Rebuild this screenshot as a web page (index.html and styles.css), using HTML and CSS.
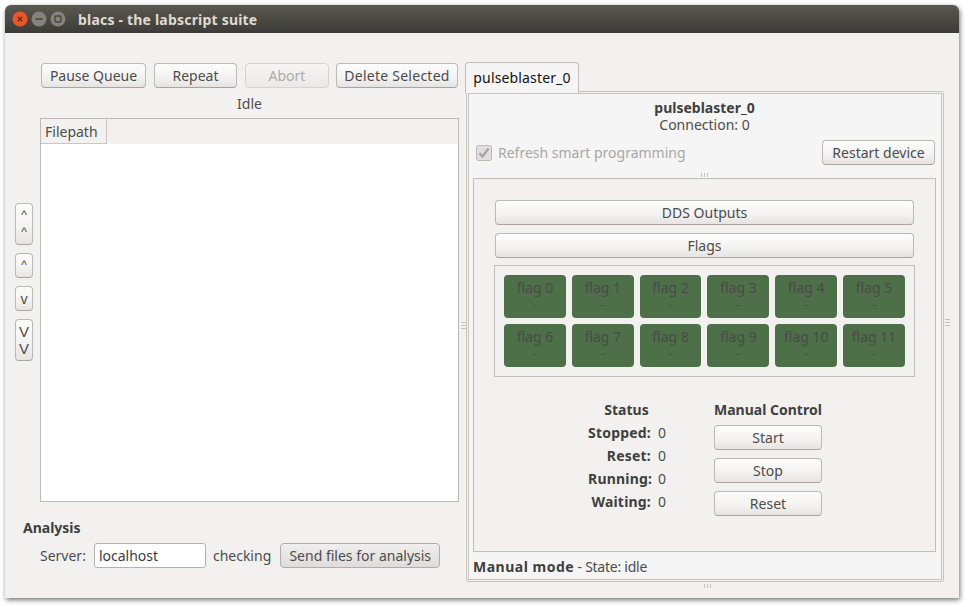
FILE: index.html
```html
<!DOCTYPE html>
<html lang="en">
<head>
<meta charset="utf-8">
<title>blacs - the labscript suite</title>
<link rel="stylesheet" href="styles.css">
</head>
<body>
<div class="window">
  <header class="titlebar">
    <div class="controls">
      <svg class="ctl" viewBox="0 0 16 16"><circle cx="8" cy="8" r="7.5" fill="#e9562a"/><path d="M5.8 5.8l4.4 4.4M10.2 5.8l-4.4 4.4" stroke="#5e2a17" stroke-width="1.3"/></svg>
      <svg class="ctl" viewBox="0 0 16 16"><circle cx="8" cy="8" r="7.5" fill="#85827a"/><path d="M4.5 8h7" stroke="#45433d" stroke-width="1.5"/></svg>
      <svg class="ctl" viewBox="0 0 16 16"><circle cx="8" cy="8" r="7.5" fill="#85827a"/><rect x="5" y="5" width="6" height="6" rx="1" fill="none" stroke="#45433d" stroke-width="1.3"/></svg>
    </div>
    <span class="wintitle">blacs - the labscript suite</span>
  </header>
  <div class="content">
    <section class="left">
      <div class="queue-row">
        <div class="arrows">
          <button class="btn arrow two caret">^<br>^</button>
          <button class="btn arrow caret">^</button>
          <button class="btn arrow">v</button>
          <button class="btn arrow two big">V<br>V</button>
        </div>
        <div class="queue">
          <div class="toolbar">
            <button class="btn w-pause">Pause Queue</button>
            <button class="btn w-repeat">Repeat</button>
            <button class="btn w-abort" disabled>Abort</button>
            <button class="btn w-delete">Delete Selected</button>
          </div>
          <div class="idle">Idle</div>
          <div class="table">
            <div class="thead"><div class="th">Filepath</div></div>
            <div class="tbody"></div>
          </div>
        </div>
      </div>
      <div class="analysis">
        <div class="bold">Analysis</div>
        <div class="server">
          <label>Server:</label>
          <div class="input">localhost</div>
          <span class="checking">checking</span>
          <button class="btn send">Send files for analysis</button>
        </div>
      </div>
    </section>
    <div class="vsplit"><span class="grip-v"></span></div>
    <section class="right">
      <div class="tabbar"><div class="tab">pulseblaster_0</div></div>
      <div class="panel">
        <div class="panel-inner">
          <div class="dev-head">
            <div class="bold">pulseblaster_0</div>
            <div>Connection: 0</div>
          </div>
          <div class="dev-row">
            <div class="check">
              <svg class="checkbox" viewBox="0 0 16 16"><rect x="0.5" y="0.5" width="15" height="15" rx="2" fill="#e2e0de" stroke="#bdbab6"/><path d="M3.5 8l3 3.5 6-8" fill="none" stroke="#a9a6a2" stroke-width="2.4"/></svg>
              <span>Refresh smart programming</span>
            </div>
            <button class="btn restart">Restart device</button>
          </div>
          <div class="hgrip"><span class="grip-h"></span></div>
          <div class="group">
            <button class="btn wide">DDS Outputs</button>
            <button class="btn wide">Flags</button>
            <div class="flags">
              <div class="flag">flag 0<small>-</small></div>
              <div class="flag">flag 1<small>-</small></div>
              <div class="flag">flag 2<small>-</small></div>
              <div class="flag">flag 3<small>-</small></div>
              <div class="flag">flag 4<small>-</small></div>
              <div class="flag">flag 5<small>-</small></div>
              <div class="flag">flag 6<small>-</small></div>
              <div class="flag">flag 7<small>-</small></div>
              <div class="flag">flag 8<small>-</small></div>
              <div class="flag">flag 9<small>-</small></div>
              <div class="flag">flag 10<small>-</small></div>
              <div class="flag">flag 11<small>-</small></div>
            </div>
            <div class="lower">
              <div class="status">
                <div class="bold status-title">Status</div>
                <div class="bold key">Stopped:</div><div>0</div>
                <div class="bold key">Reset:</div><div>0</div>
                <div class="bold key">Running:</div><div>0</div>
                <div class="bold key">Waiting:</div><div>0</div>
              </div>
              <div class="manual">
                <div class="bold manual-title">Manual Control</div>
                <button class="btn">Start</button>
                <button class="btn">Stop</button>
                <button class="btn">Reset</button>
              </div>
            </div>
          </div>
          <div class="state"><span class="bold spaced">Manual mode</span> - State: idle</div>
        </div>
      </div>
      <div class="hgrip low"><span class="grip-h"></span></div>
    </section>
    <div class="vsplit end"><span class="grip-v"></span></div>
  </div>
</div>
</body>
</html>
```

FILE: styles.css
```css
* { box-sizing: border-box; }
html, body { margin: 0; padding: 0; background: #fff; }
body {
  width: 968px; height: 607px; overflow: hidden;
  padding: 5px 9px 9px 5px;
  font-family: "Noto Sans", "Open Sans", sans-serif;
  font-size: 14px; line-height: 17px; color: #4c4c4c;
}
.window {
  width: 954px; height: 593px;
  background: #f2f1f0;
  border-radius: 6px 6px 0 0;
  box-shadow: 1px 2px 5px rgba(0,0,0,.55);
  display: flex; flex-direction: column;
}
.titlebar {
  height: 28px; flex: none;
  background: linear-gradient(#5b5850, #3c3b37);
  border-radius: 6px 6px 0 0;
  display: flex; align-items: center;
  padding-left: 7px;
}
.controls { display: flex; gap: 3px; }
.ctl { width: 16px; height: 16px; display: block; }
.wintitle { margin-left: 12px; color: #dfdbd2; font-weight: 700; font-size: 14px; letter-spacing: .2px; }
.content { flex: 1; display: flex; min-height: 0; }
.bold { font-weight: 700; color: #3f3f3f; }
.spaced { letter-spacing: .5px; }

.btn {
  font: inherit; color: #4c4c4c;
  height: 25px; padding: 0;
  background: linear-gradient(#fdfdfd, #f4f3f2 55%, #e6e4e2);
  border: 1px solid #bcb8b3; border-bottom-color: #a8a4a0;
  border-radius: 4px;
  display: block;
}
.btn:disabled { color: #aeaba7; border-color: #d6d3d0; background: linear-gradient(#f6f5f4, #ebe9e8); }

.left { width: 457px; flex: none; display: flex; flex-direction: column; }
.queue-row { display: flex; height: 469px; flex: none; }
.arrows {
  width: 18px; margin-left: 10px; margin-top: 170px;
  display: flex; flex-direction: column; gap: 8px;
}
.arrow { width: 18px; line-height: 17px; }
.arrow.two { height: 42px; }
.arrow.caret { font-size: 12px; font-family: "Liberation Sans", sans-serif; }
.arrow.big { font-family: "Liberation Sans", sans-serif; font-size: 15px; }
.queue { margin-left: 7px; width: 419px; padding-top: 30px; }
.toolbar { display: flex; margin-left: 1px; }
.w-pause { width: 105px; }
.w-repeat { width: 83px; margin-left: 8px; }
.w-abort { width: 84px; margin-left: 8px; }
.w-delete { width: 122px; margin-left: 7px; letter-spacing: .25px; }
.idle { text-align: center; height: 30px; padding-top: 7px; }
.table { height: 384px; border: 1px solid #bcb9b4; display: flex; flex-direction: column; background: #fff; }
.thead { height: 25px; flex: none; background: #f2f1f0; }
.th { width: 66px; height: 25px; padding: 4px 0 0 4px; border-right: 1px solid #c9c6c2; border-bottom: 1px solid #c9c6c2; }
.tbody { flex: 1; }
.analysis { padding: 17px 0 0 18px; }
.server { display: flex; align-items: center; margin: 7px 0 0 17px; height: 25px; }
.input {
  width: 112px; height: 25px; margin-left: 8px;
  background: #fff; border: 1px solid #b5b1ad; border-radius: 3px;
  padding: 3px 0 0 4px; color: #3c3c3c;
}
.checking { margin-left: 7px; }
.send { width: 160px; margin-left: 9px; background: linear-gradient(#f0efee, #dfdcd9); border-color: #b0aca8; }

.vsplit { width: 3px; flex: none; display: flex; align-items: center; justify-content: center; padding-top: 20px; }
.vsplit.end { width: 15px; padding-top: 14px; padding-right: 9px; }
.grip-v { width: 5px; height: 7px; flex: none; border-top: 1px solid #c4c2bf; border-bottom: 1px solid #c4c2bf; background: linear-gradient(#c4c2bf, #c4c2bf) center / 100% 1px no-repeat; }
.grip-h { width: 7px; height: 4px; display: block; border-left: 1px solid #c4c2bf; border-right: 1px solid #c4c2bf; background: linear-gradient(#c4c2bf, #c4c2bf) center / 1px 100% no-repeat; }

.right { width: 479px; flex: none; padding-top: 29px; }
.tabbar { display: flex; height: 31px; margin-bottom: -2px; }
.tab {
  width: 114px; height: 31px; z-index: 1;
  background: #f5f5f5; color: #111;
  border: 1px solid #c1bdb8; border-bottom: 0; border-radius: 4px 4px 0 0;
  text-align: center; padding-top: 6px; letter-spacing: .15px;
}
.panel {
  margin-left: 1px; width: 478px; height: 491px;
  border: 1px solid #c8c5c0; padding: 1px; border-radius: 2px;
}
.panel-inner {
  height: 100%;
  border: 1px solid #c8c5c0;
  background: #f5f5f5;
  padding: 5px 5px 0 4px;
  display: flex; flex-direction: column;
}
.dev-head { text-align: center; }
.dev-row { display: flex; justify-content: space-between; align-items: center; height: 25px; margin-top: 7px; padding: 0 1px 0 3px; }
.check { display: flex; align-items: center; color: #aaa7a3; }
.checkbox { width: 16px; height: 16px; display: block; margin-right: 6px; }
.restart { width: 113px; }
.hgrip { height: 13px; display: flex; justify-content: center; align-items: flex-end; padding-bottom: 1px; }
.hgrip.low { height: 6px; margin-left: 6px; padding-bottom: 0; }
.group {
  height: 374px; flex: none;
  background: #f2f1f0; border: 1px solid #c1bdb8;
  padding: 21px 21px 0;
}
.wide { width: 419px; }
.wide + .wide { margin-top: 8px; }
.flags {
  margin: 7px -1px 0;
  height: 112px;
  border: 1px solid #c1bdb8;
  padding: 9px;
  display: grid; grid-template-columns: repeat(6, 1fr); grid-auto-rows: 43px; gap: 6px;
}
.flag {
  background: #4d7049; border-radius: 4px; color: #4a4a47;
  text-align: center; padding-top: 4px; line-height: 17px;
}
.flag small { display: block; font-size: 12px; line-height: 17px; }
.lower { display: flex; padding-left: 93px; margin-top: 24px; }
.status { display: grid; grid-template-columns: 63px auto; column-gap: 7px; grid-auto-rows: 23px; width: 126px; align-content: start; }
.status-title { grid-column: 1 / 3; width: 77px; text-align: center; }
.key { text-align: right; letter-spacing: .2px; }
.manual { width: 108px; display: flex; flex-direction: column; gap: 8px; }
.manual-title { white-space: nowrap; height: 14px; margin-bottom: 2px; }
.manual .btn { width: 108px; }
.state { padding-top: 6px; letter-spacing: -.25px; }
```
